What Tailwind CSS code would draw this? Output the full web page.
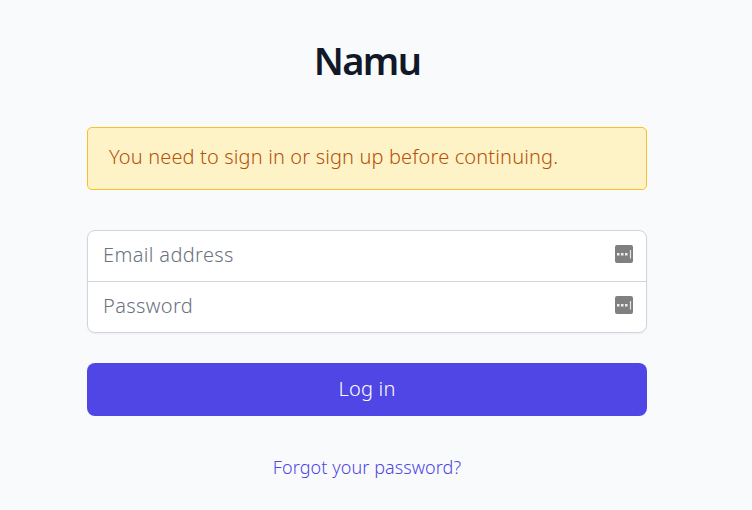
<!DOCTYPE html>
<html lang="en"><head><meta charset="utf-8"><title>Namu</title>
<script src="https://cdn.jsdelivr.net/npm/@tailwindcss/browser@4"></script></head>
<body class="bg-[#f9fafc] h-[510px] overflow-hidden font-['Noto_Sans',sans-serif]">
<main class="ml-[87px] w-[560px] flex flex-col pt-[36px]">
<h1 class="h-[48px] leading-[48px] text-center font-semibold text-[38px] tracking-[-1.6px] text-[#111827]"><span>Namu</span></h1>
<div class="mt-[43px] h-[63px] rounded-[5px] border border-[#fbbf24] bg-[#fef2c7] px-[21px] leading-[57px] text-[20px] tracking-[0.14px] font-light text-[#b45309]"><span>You need to sign in or sign up before continuing.</span></div>
<form class="mt-[40px]">
<div class="rounded-[8px] border border-[#d1d5db] bg-white shadow-xs text-[20px] tracking-[0.36px] font-light text-[#6b7280]">
<div class="h-[51px] flex items-center justify-between pl-[15px] pr-[13px] pb-[3px] border-b border-[#d1d5db]"><span>Email address</span><svg class="mb-[2px]" width="18" height="18" viewBox="0 0 18 18"><rect width="18" height="18" rx="2" fill="#808080"/><path d="M2 8h2.5v2.5H2zM6 8h2.5v2.5H6zM10 8h2.5v2.5H10z" fill="#eee"/><path d="M15.5 5v8.5" stroke="#e5e5e5" stroke-width="1.2"/></svg></div>
<div class="h-[50px] flex items-center justify-between pl-[15px] pr-[13px] pb-[2px]"><span>Password</span><svg class="mb-[2px]" width="18" height="18" viewBox="0 0 18 18"><rect width="18" height="18" rx="2" fill="#808080"/><path d="M2 8h2.5v2.5H2zM6 8h2.5v2.5H6zM10 8h2.5v2.5H10z" fill="#eee"/><path d="M15.5 5v8.5" stroke="#e5e5e5" stroke-width="1.2"/></svg></div>
</div>
<button type="button" class="mt-[30px] block h-[53px] w-full rounded-[8px] bg-[#4f46e5] text-white text-[20px] tracking-[0.2px] font-light pb-[2px]"><span>Log in</span></button>
</form>
<a class="mt-[37px] text-center text-[18px] leading-[28px] tracking-[0.08px] font-light text-[#4f46e5]"><span>Forgot your password?</span></a>
</main></body></html>
